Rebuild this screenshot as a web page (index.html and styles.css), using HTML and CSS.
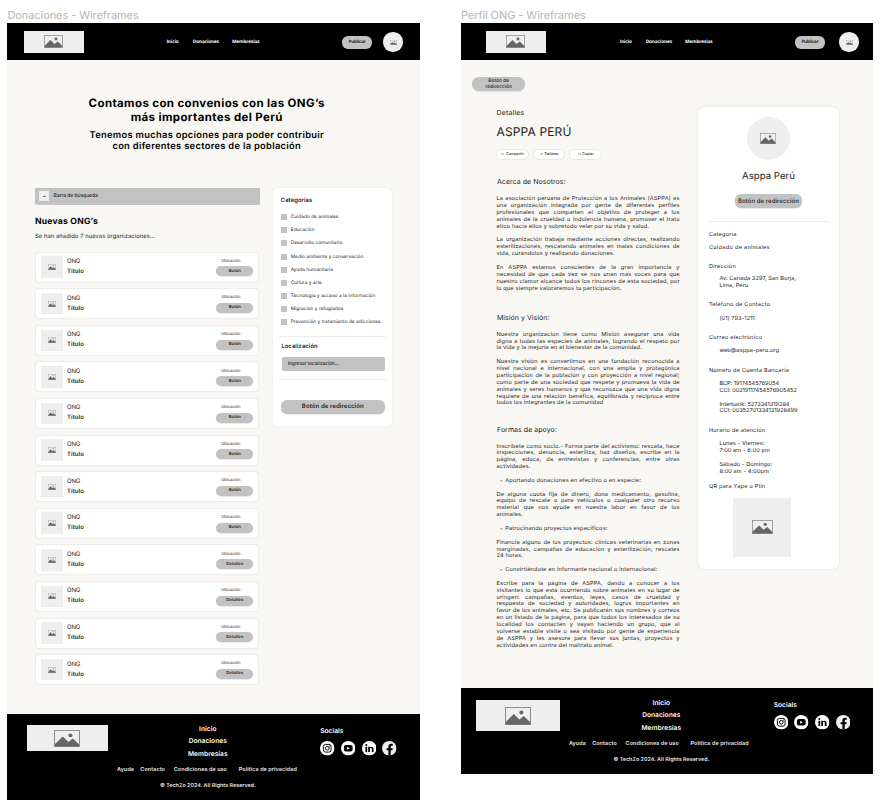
FILE: index.html
```
<!DOCTYPE html>
<html lang="es">
<head>
<meta charset="utf-8">
<title>Wireframes</title>
<link rel="stylesheet" href="styles.css">
</head>
<body>
<svg class="defs" width="0" height="0" aria-hidden="true">
  <symbol id="img" viewBox="0 0 26 18" preserveAspectRatio="none">
    <rect x=".5" y=".5" width="25" height="17" fill="none" stroke="#8c8c8c"/>
    <path d="M1 17.4v-2.6L8.8 7l5.6 5.6L18.8 9 25 15v2.4z" fill="#666"/>
    <circle cx="16.4" cy="5.6" r="2" fill="#666"/>
  </symbol>
  <symbol id="ig" viewBox="0 0 29 29">
    <circle cx="14.5" cy="14.5" r="14.5" fill="#fff"/>
    <rect x="6.8" y="6.8" width="15.4" height="15.4" rx="4.4" fill="none" stroke="#000" stroke-width="1.9"/>
    <circle cx="14.5" cy="14.5" r="3.7" fill="none" stroke="#000" stroke-width="1.9"/>
    <circle cx="18.9" cy="10.1" r="1.1"/>
  </symbol>
  <symbol id="yt" viewBox="0 0 29 29">
    <circle cx="14.5" cy="14.5" r="14.5" fill="#fff"/>
    <rect x="5.8" y="8" width="17.4" height="13" rx="4"/>
    <path d="M12.4 11.4v6.2l5.4-3.1z" fill="#fff"/>
  </symbol>
  <symbol id="li" viewBox="0 0 29 29">
    <circle cx="14.5" cy="14.5" r="14.5" fill="#fff"/>
    <circle cx="8.6" cy="8.2" r="2"/>
    <path d="M6.9 11.6h3.5V22H6.9zM12.4 11.6h3.3v1.5c.7-1.1 1.8-1.8 3.4-1.8 3 0 4 1.9 4 4.8V22h-3.5v-5.3c0-1.4-.4-2.5-1.7-2.5-1.5 0-2 1.1-2 2.5V22h-3.5z"/>
  </symbol>
  <symbol id="fb" viewBox="0 0 29 29">
    <circle cx="14.5" cy="14.5" r="14.5" fill="#efefef"/>
    <path d="M12.8 29V18.6H9.2v-4.2h3.6v-3.2c0-3.7 2.200-5.700 5.500-5.700 1.600 0 3.200.3 3.200.3v3.600h-1.800c-1.800 0-2.300 1.100-2.300 2.200v2.800h4l-.7 4.200h-3.300V29z"/>
  </symbol>
</svg>

<section class="frame">
  <h6 class="label">Donaciones - Wireframes</h6>
  <div class="board board-list">
    <header class="top top-list">
      <div class="logo"><svg><use href="#img"/></svg></div>
      <a>Inicio</a><a>Donaciones</a><a>Membresías</a>
      <button class="pill publish">Publicar</button>
      <div class="avatar"><svg><use href="#img"/></svg></div>
    </header>
    <div class="hero">
      <h1>Contamos con convenios con las ONG’s<br>más importantes del Perú</h1>
      <p>Tenemos muchas opciones para poder contribuir<br>con diferentes sectores de la población</p>
    </div>
    <main class="columns">
      <div class="results">
        <div class="search"><i><svg><use href="#img"/></svg></i><span>Barra de búsqueda</span></div>
        <h2>Nuevas ONG’s</h2>
        <p class="count">Se han añadido 7 nuevas organizaciones...</p>
        <div class="cards">
          <article class="card"><div class="thumb"><svg><use href="#img"/></svg></div><div class="who"><span>ONG</span><b>Título</b></div><div class="act"><span>Ubicación</span><button class="pill">Botón</button></div></article>
          <article class="card"><div class="thumb"><svg><use href="#img"/></svg></div><div class="who"><span>ONG</span><b>Título</b></div><div class="act"><span>Ubicación</span><button class="pill">Botón</button></div></article>
          <article class="card"><div class="thumb"><svg><use href="#img"/></svg></div><div class="who"><span>ONG</span><b>Título</b></div><div class="act"><span>Ubicación</span><button class="pill">Botón</button></div></article>
          <article class="card"><div class="thumb"><svg><use href="#img"/></svg></div><div class="who"><span>ONG</span><b>Título</b></div><div class="act"><span>Ubicación</span><button class="pill">Botón</button></div></article>
          <article class="card"><div class="thumb"><svg><use href="#img"/></svg></div><div class="who"><span>ONG</span><b>Título</b></div><div class="act"><span>Ubicación</span><button class="pill">Botón</button></div></article>
          <article class="card"><div class="thumb"><svg><use href="#img"/></svg></div><div class="who"><span>ONG</span><b>Título</b></div><div class="act"><span>Ubicación</span><button class="pill">Botón</button></div></article>
          <article class="card"><div class="thumb"><svg><use href="#img"/></svg></div><div class="who"><span>ONG</span><b>Título</b></div><div class="act"><span>Ubicación</span><button class="pill">Botón</button></div></article>
          <article class="card"><div class="thumb"><svg><use href="#img"/></svg></div><div class="who"><span>ONG</span><b>Título</b></div><div class="act"><span>Ubicación</span><button class="pill">Botón</button></div></article>
          <article class="card"><div class="thumb"><svg><use href="#img"/></svg></div><div class="who"><span>ONG</span><b>Título</b></div><div class="act"><span>Ubicación</span><button class="pill">Detalles</button></div></article>
          <article class="card"><div class="thumb"><svg><use href="#img"/></svg></div><div class="who"><span>ONG</span><b>Título</b></div><div class="act"><span>Ubicación</span><button class="pill">Detalles</button></div></article>
          <article class="card"><div class="thumb"><svg><use href="#img"/></svg></div><div class="who"><span>ONG</span><b>Título</b></div><div class="act"><span>Ubicación</span><button class="pill">Detalles</button></div></article>
          <article class="card"><div class="thumb"><svg><use href="#img"/></svg></div><div class="who"><span>ONG</span><b>Título</b></div><div class="act"><span>Ubicación</span><button class="pill">Detalles</button></div></article>
        </div>
      </div>
      <aside class="filters">
        <h3>Categorías</h3>
        <ul>
          <li>Cuidado de animales</li>
          <li>Educación</li>
          <li>Desarrollo comunitario</li>
          <li>Medio ambiente y conservación</li>
          <li>Ayuda humanitaria</li>
          <li>Cultura y arte</li>
          <li>Tecnología y acceso a la información</li>
          <li>Migración y refugiados</li>
          <li>Prevención y tratamiento de adicciones</li>
        </ul>
        <hr>
        <h3 class="loc">Localización</h3>
        <div class="input">Ingresar localización...</div>
        <hr>
        <button class="pill wide">Botón de redirección</button>
      </aside>
    </main>
    <footer class="foot foot-list">
      <div class="foot-top">
        <div class="logo"><svg><use href="#img"/></svg></div>
        <nav><a>Inicio</a><a>Donaciones</a><a>Membresías</a></nav>
        <div class="social"><b>Socials</b><div><svg><use href="#ig"/></svg><svg><use href="#yt"/></svg><svg><use href="#li"/></svg><svg><use href="#fb"/></svg></div></div>
      </div>
      <div class="legal"><a>Ayuda</a><a>Contacto</a><a>Condiciones de uso</a><a>Política de privacidad</a></div>
      <p>© TechZo 2024. All Rights Reserved.</p>
    </footer>
  </div>
</section>

<section class="frame">
  <h6 class="label">Perfil ONG - Wireframes</h6>
  <div class="board board-profile">
    <header class="top top-profile">
      <div class="logo"><svg><use href="#img"/></svg></div>
      <a>Inicio</a><a>Donaciones</a><a>Membresías</a>
      <button class="pill publish">Publicar</button>
      <div class="avatar"><svg><use href="#img"/></svg></div>
    </header>
    <main class="profile">
      <div class="detail">
        <button class="pill back">Botón de<br>redirección</button>
        <div class="text">
          <p class="kicker">Detalles</p>
          <h1>ASPPA PERÚ</h1>
          <div class="share"><span><i></i>Compartir</span><span><i></i>Twittear</span><span><i></i>Copiar</span></div>
          <h2>Acerca de Nosotros:</h2>
          <p><span>La asociación peruana de Protección a los Animales (ASPPA) es</span><span>una organización integrada por gente de diferentes perfiles</span><span>profesionales que comparten el objetivo de proteger a los</span><span>animales de la crueldad o indolencia humana, promover el trato</span><span>ético hacia ellos y sobretodo velar por su vida y salud.</span></p>
          <p><span>La organización trabaja mediante acciones directas, realizando</span><span>esterilizaciones, rescatando animales en malas condiciones de</span><span>vida, curándolos y realizando donaciones.</span></p>
          <p><span>En ASPPA estamos conscientes de la gran importancia y</span><span>necesidad de que cada vez se nos unan más voces para que</span><span>nuestro clamor alcance todos los rincones de esta sociedad, por</span><span>lo que siempre valoraremos tu participación.</span></p>
          <h2>Misión y Visión:</h2>
          <p><span>Nuestra organizacion tiene como Misión asegurar una vida</span><span>digna a todas las especies de animales, logrando el respeto por</span><span>la vida y la mejoría en el bienestar de la comunidad.</span></p>
          <p><span>Nuestra visión es convertirnos en una fundación reconocida a</span><span>nivel nacional e internacional, con una amplia y protagónica</span><span>participación de la población y con proyección a nivel regional;</span><span>como parte de una sociedad que respete y promueva la vida de</span><span>animales y seres humanos y que reconozca que una vida digna</span><span>requiere de una relación benéfica, equilibrada y recíproca entre</span><span>todos los integrantes de la comunidad</span></p>
          <h2 class="support">Formas de apoyo:</h2>
          <p><span>Inscríbete como socio.- Forma parte del activismo: rescata, hace</span><span>inspecciones, denuncia, esteriliza, haz diseños, escribe en la</span><span>página, educa, da entrevistas y conferencias, entre otras</span><span>actividades.</span></p>
          <p class="bullet">Aportando donaciones en efectivo o en especie:</p>
          <p><span>De alguna cuota fija de dinero, dona medicamento, gasolina,</span><span>equipo de rescate o para vehículos o cualquier otro recurso</span><span>material que nos ayude en nuestra labor en favor de los</span><span>animales.</span></p>
          <p class="bullet">Patrocinando proyectos específicos:</p>
          <p><span>Financia alguno de los proyectos: clínicas veterinarias en zonas</span><span>marginadas, campañas de educación y esterilización, rescates</span><span>24 horas.</span></p>
          <p class="bullet">Convirtiéndote en informante nacional o internacional:</p>
          <p><span>Escribe para la página de ASPPA, dando a conocer a los</span><span>visitantes lo que está ocurriendo sobre animales en su lugar de</span><span>oringen: campañas, eventos, leyes, casos de crueldad y</span><span>respuesta de sociedad y autoridades, logros importantes en</span><span>favor de los animales, etc. Se publicarán sus nombres y correos</span><span>en un listado de la página, para que todos los interesados de su</span><span>localidad los contacten y vayan haciendo un grupo, que al</span><span>volverse estable visite o sea visitado por gente de experiencia</span><span>de ASPPA y les asesore para llevar sus juntas, proyectos y</span><span>actividades en contra del maltrato animal.</span></p>
        </div>
      </div>
      <aside class="contact">
        <div class="photo"><svg><use href="#img"/></svg></div>
        <h3>Asppa Perú</h3>
        <button class="pill">Botón de redirección</button>
        <hr>
        <dl>
          <dt>Categoría</dt><dd class="flat">Cuidado de animales</dd>
          <dt>Dirección</dt><dd class="near">Av. Canada 3297, San Borja,<br>Lima, Peru</dd>
          <dt>Teléfono de Contacto</dt><dd>(01) 793-1211</dd>
          <dt>Correo electrónico</dt><dd class="mail">web@asppa-peru.org</dd>
          <dt>Número de Cuenta Bancaria</dt><dd class="num">BCP: 19174545769054<br>CCI: 00219117454576905452<br><br>Interbank: 5273341319284<br>CCI: 00352701334131928499</dd>
          <dt>Horario de atención</dt><dd>Lunes - Viernes:<br>7:00 am - 6:00 pm<br><br>Sábado - Domingo:<br>8:00 am - 4:00pm</dd>
          <dt class="qr">QR para Yape o Plin</dt>
        </dl>
        <div class="code"><svg><use href="#img"/></svg></div>
      </aside>
    </main>
    <footer class="foot foot-profile">
      <div class="foot-top">
        <div class="logo"><svg><use href="#img"/></svg></div>
        <nav><a>Inicio</a><a>Donaciones</a><a>Membresías</a></nav>
        <div class="social"><b>Socials</b><div><svg><use href="#ig"/></svg><svg><use href="#yt"/></svg><svg><use href="#li"/></svg><svg><use href="#fb"/></svg></div></div>
      </div>
      <div class="legal"><a>Ayuda</a><a>Contacto</a><a>Condiciones de uso</a><a>Política de privacidad</a></div>
      <p>© TechZo 2024. All Rights Reserved.</p>
    </footer>
  </div>
</section>
</body>
</html>
```
FILE: styles.css
```
* { box-sizing: border-box; margin: 0; padding: 0; }
body {
  display: flex;
  gap: 41px;
  padding: 8px 0 0 7.4px;
  width: 882px;
  height: 811px;
  overflow: hidden;
  background: #fff;
  color: #222;
  font-family: Inter, "Liberation Sans", sans-serif;
  text-rendering: geometricPrecision;
  white-space: nowrap;
}
svg { display: block; }
.defs { position: absolute; }
button { border: 0; font-family: inherit; color: inherit; white-space: nowrap; text-rendering: inherit; }
.frame { width: 412.5px; flex: none; }
.label { height: 15.4px; font-size: 11px; font-weight: 400; line-height: 15px; letter-spacing: -.006em; color: #b5b5b5; }
.board { display: flex; flex-direction: column; background: #f8f7f3; }
.board-list { height: 776.6px; }
.board-profile { height: 750.6px; }
.pill { display: flex; align-items: center; justify-content: center; background: #c2c2c2; box-shadow: 0 .5px 1px rgba(0,0,0,.16); }

/* Header */
.top { display: grid; align-items: center; height: 36.3px; flex: none; padding-top: 1px; background: #000; }
.top-list { padding-left: 16.2px; grid-template-columns: 142.8px 26.4px 39.2px 110.2px 41.2px 20px; }
.top-profile { padding-left: 24.8px; grid-template-columns: 134px 26px 39.3px 110px 44.5px 20px; }
.top a { color: #fff; font: 700 4.7px/8px "Open Sans", sans-serif; letter-spacing: -.022em; }
.top .logo { width: 60px; height: 22px; }
.top .logo svg { width: 19px; height: 13px; margin-top: -1px; }
.logo { display: flex; align-items: center; justify-content: center; background: #eee; }
.publish { width: 30px; height: 13px; border-radius: 6px; font: 700 4.5px/8px "Open Sans", sans-serif; letter-spacing: -.035em; }
.avatar { display: flex; align-items: center; justify-content: center; width: 19.4px; height: 19.4px; border-radius: 50%; background: #eee; }
.avatar svg { width: 7px; height: 5px; }

/* Hero */
.hero { padding: 36px 13.8px 0 0; height: 128.5px; flex: none; text-align: center; color: #000; }
.hero h1 { font-size: 11.5px; line-height: 14px; letter-spacing: .032em; }
.hero p { margin-top: 6px; font-size: 9.3px; font-weight: 600; line-height: 11.3px; letter-spacing: .034em; }

/* List page */
.columns { display: flex; align-items: flex-start; gap: 13px; padding-left: 27.6px; flex: 1; }
.results { width: 225px; }
.search { display: flex; align-items: center; gap: 4px; height: 15.6px; padding-left: 4px; background: #c2c2c2; box-shadow: 0 .5px 1px rgba(0,0,0,.2); font-size: 5px; font-weight: 500; letter-spacing: -.012em; }
.search i { display: flex; align-items: center; justify-content: center; width: 10.5px; height: 10px; background: #eee; }
.search svg { width: 3px; height: 2px; }
.results h2 { margin-top: 12.6px; font-size: 8.6px; line-height: 12px; letter-spacing: .026em; color: #000; }
.count { margin-top: 5px; font-size: 5.8px; line-height: 8px; letter-spacing: .013em; }
.cards { display: grid; gap: 5.6px; margin-top: 10.2px; padding: 0 .5px; }
.card { display: flex; align-items: center; height: 31px; padding: 0 5.2px 0 5px; border: .5px solid #ececea; border-radius: 4px; background: #fff; box-shadow: 0 0 1px rgba(0,0,0,.06); }
.thumb { display: flex; align-items: center; justify-content: center; width: 21.5px; height: 21.5px; background: #eee; }
.thumb svg { width: 8px; height: 6px; }
.who { display: grid; margin: 0 auto 0 4px; font-size: 6px; line-height: 10px; }
.who span { letter-spacing: -.03em; }
.who b { font-weight: 600; letter-spacing: .013em; }
.act { display: grid; justify-items: center; width: 37px; font-size: 4px; line-height: 6px; }
.act span { margin: 0 8px 2.6px 0; }
.act .pill { width: 37px; height: 10px; border-radius: 5px; font-size: 4.2px; font-weight: 600; letter-spacing: .02em; }
hr { border: 0; height: 1px; background: #ececec; }
.filters { width: 119px; height: 238.3px; padding: 8px 5.5px 0 5.8px; border-radius: 4px; background: #fff; box-shadow: 0 0 1px rgba(0,0,0,.16); }
.filters h3 { padding-left: 2px; font-size: 5.8px; font-weight: 600; line-height: 9px; letter-spacing: .016em; }
.filters ul { display: grid; gap: 5.13px; margin: 8px 0 9.6px 2px; list-style: none; }
.filters li { display: flex; align-items: center; gap: 4px; height: 8px; font-size: 4.7px; letter-spacing: .014em; }
.filters li::before { content: ""; width: 6px; height: 6px; background: #c2c2c2; }
.filters .loc { margin: 5.5px 0 6px .6px; }
.input { width: 103.5px; height: 14px; margin: 0 0 8px 3px; padding-left: 6px; border-radius: 2px; background: #c2c2c2; font-size: 4.9px; font-weight: 500; line-height: 14px; letter-spacing: -.014em; }
.wide { width: 104px; height: 14px; margin: 19.6px 0 0 2px; border-radius: 6px; font-size: 6.1px; font-weight: 600; letter-spacing: .007em; }

/* Profile page */
.profile { display: flex; align-items: flex-start; flex: 1; }
.detail { width: 236.7px; padding: 17px 0 0 11.6px; }
.back { width: 52.5px; height: 14px; border-radius: 7px; font-size: 4.8px; font-weight: 500; line-height: 6px; letter-spacing: .01em; }
.text { margin: 17.5px 0 0 24px; width: 183.2px; font-size: 5.6px; line-height: 6.87px; letter-spacing: .03em; }
.text .kicker { margin: 0; font-size: 7px; line-height: 9px; letter-spacing: .026em; }
.text h1 { margin-top: 7px; font-size: 12px; font-weight: 400; line-height: 15px; letter-spacing: .012em; }
.text h2 { margin: 20.3px 0 9px .5px; font-size: 7px; font-weight: 400; line-height: 10px; letter-spacing: .006em; }
.text .share + h2 { margin-top: 17.5px; }
.text .support { margin-top: 17.2px; }
.text p + p { margin-top: 6.87px; }
.text p span { display: block; text-align: justify; text-align-last: justify; }
.text p span:last-child { text-align-last: left; }
.text .bullet { display: flex; align-items: center; height: 6.87px; padding-left: 3.6px; }
.bullet::before { content: "•"; width: 5.2px; font-size: 4px; }
.share { display: flex; gap: 4px; margin-top: 9.5px; }
.share span { display: flex; align-items: center; justify-content: center; gap: 1.5px; width: 32.5px; height: 11px; border: .5px solid #e6e6e6; border-radius: 5.5px; background: #fff; font-size: 3.7px; font-weight: 500; letter-spacing: .01em; }
.share i { width: 3px; height: 2px; background: #ccc; }
.contact { width: 141.8px; height: 462px; margin-top: 47px; padding: 10px 9.5px 0; border-radius: 6px; background: #fff; box-shadow: 0 0 1.5px rgba(0,0,0,.2); }
.photo { display: flex; align-items: center; justify-content: center; width: 43px; height: 43px; margin: 0 auto; border-radius: 50%; background: #eee; }
.photo svg { width: 16px; height: 11px; }
.contact h3 { margin-top: 10px; font-size: 9.6px; font-weight: 400; line-height: 13px; letter-spacing: .004em; text-align: center; }
.contact .pill { width: 66.5px; height: 14px; margin: 11.6px auto 12.5px; border-radius: 6px; font-size: 6.1px; font-weight: 500; letter-spacing: .004em; }
.contact dl { padding-left: 1.8px; margin-top: 10.5px; font-size: 5.6px; line-height: 6.87px; letter-spacing: .04em; }
.contact dt { margin-top: 12.3px; }
.contact dt:first-child { margin-top: 0; }
.contact dd { margin: 6.6px 0 0 10.5px; letter-spacing: .018em; }
.contact .flat { margin: 5.4px 0 0; letter-spacing: .053em; }
.contact .near { margin-top: 5.6px; }
.contact .num { letter-spacing: -.003em; }
.contact .qr { margin-top: 8.4px; }
.code { display: flex; align-items: center; justify-content: center; width: 58.5px; height: 58.5px; margin: 7.3px 0 0 25.8px; background: #eee; }
.code svg { width: 21px; height: 14px; }

/* Footer */
.foot { height: 85.7px; flex: none; background: #000; color: #fff; }
.foot-top { display: grid; align-items: start; padding-left: 19.4px; height: 50.5px; grid-template-columns: 141px 80px 1fr; }
.foot-profile .foot-top { padding-left: 15.4px; grid-template-columns: 145px 80px 1fr; }
.foot .logo { width: 81px; height: 26.5px; margin-top: 10.5px; }
.foot .logo svg { width: 26px; height: 17px; }
.foot-profile .logo { width: 83.5px; height: 31px; margin-top: 12px; }
.foot-profile .logo svg { height: 18px; }
.foot nav { display: grid; margin-top: 8.8px; font-size: 6.6px; font-weight: 600; line-height: 12.2px; letter-spacing: .008em; text-align: center; }
.social { margin: 12.9px 0 0 72.5px; font-size: 6.6px; line-height: 9px; }
.social b { font-weight: 600; }
.social div { display: flex; gap: 6.2px; margin-top: 5px; }
.social svg { width: 14.5px; height: 14.5px; }
.legal { display: flex; padding-left: 109.7px; font-size: 5.4px; font-weight: 600; line-height: 10px; letter-spacing: .018em; color: #e8e8e8; }
.foot-profile .legal { padding-left: 108px; }
.legal a:nth-child(2) { margin-left: 6.3px; }
.legal a:nth-child(3) { margin-left: 8.8px; }
.legal a:nth-child(4) { margin-left: 11.8px; }
.foot p { width: 401px; margin-top: 6.7px; font-size: 5.3px; font-weight: 600; line-height: 10px; letter-spacing: .009em; text-align: center; color: #e8e8e8; }
```
